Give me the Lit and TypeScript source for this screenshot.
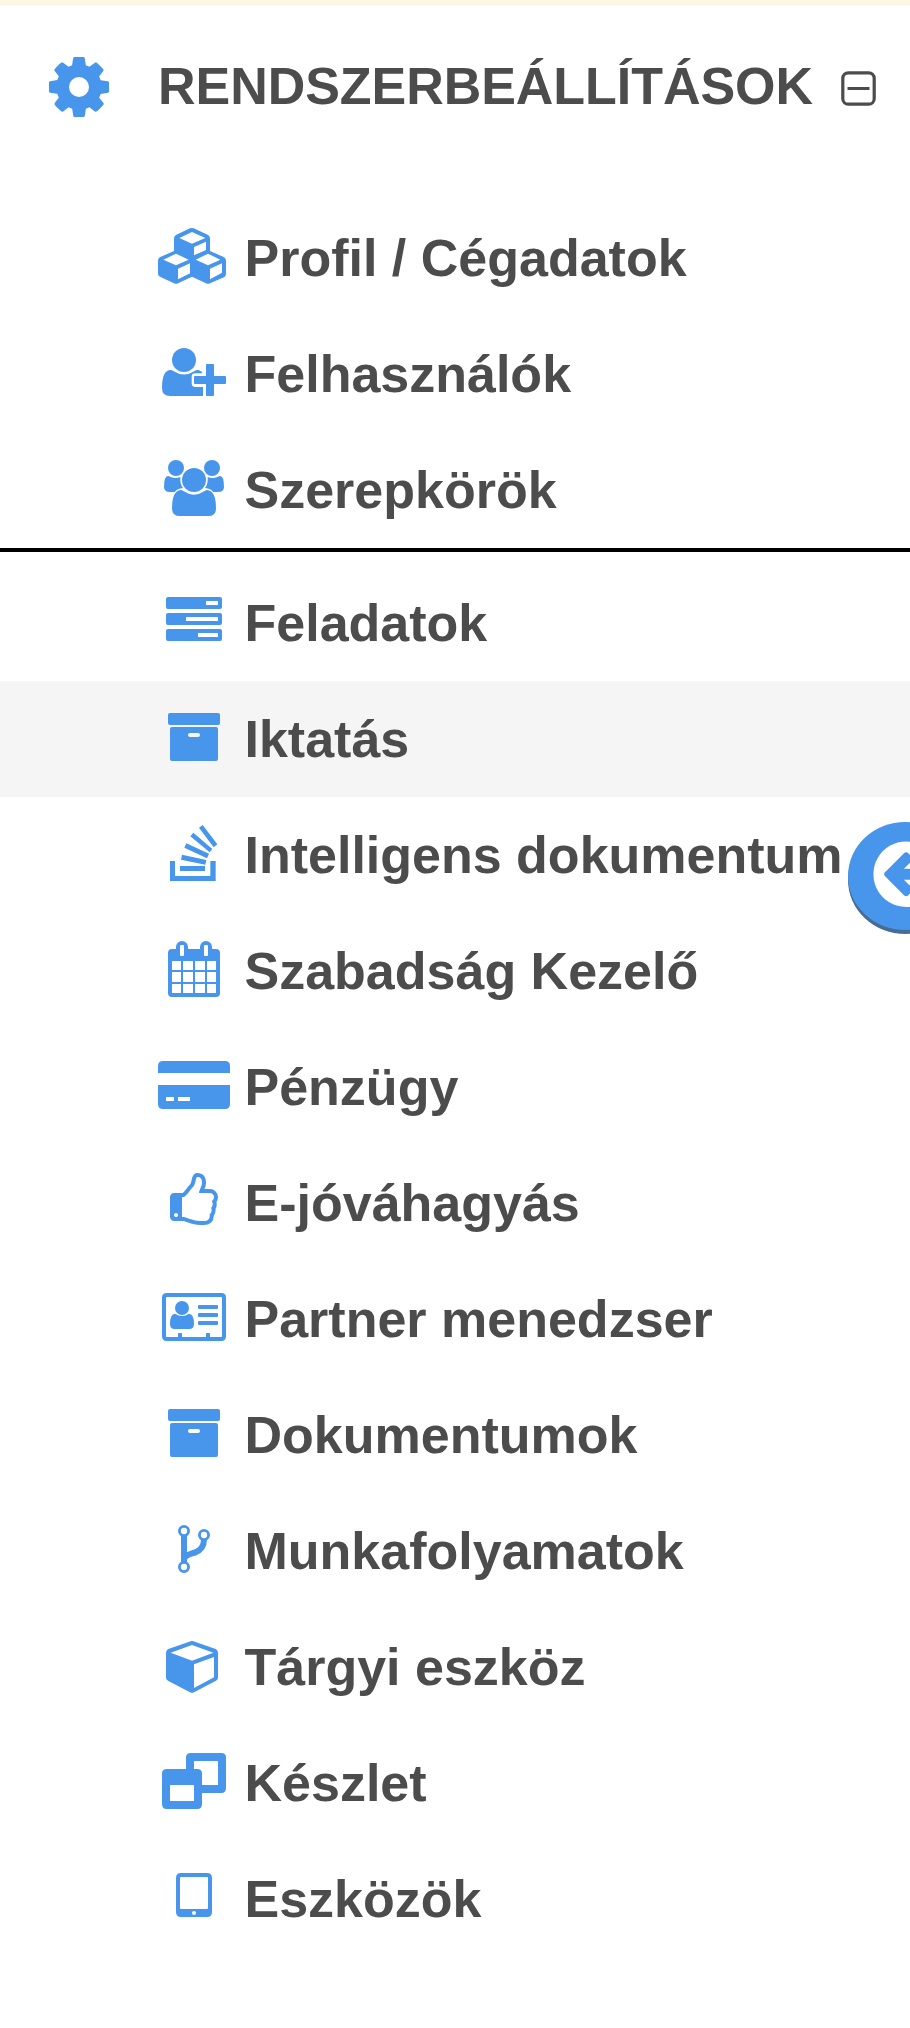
import { LitElement, html, svg, css, SVGTemplateResult } from "lit";
import { customElement, property } from "lit/decorators.js";

/* Glyphs share one 216 x 168 grid (three units per pixel). */
const icons: Record<string, SVGTemplateResult> = {
  cubes: svg`<path fill-rule="evenodd" d="M102 0Q104 0 107 1L149 20Q156 23 156 31V69L197 87Q204 90 204 98V137Q204 145 198 148L156 166Q150 169 144 166L102 146L60 166Q54 169 48 166L6 146Q0 143 0 137V97Q0 90 7 87L48 69V31Q48 24 55 20L96 1Q99 0 102 0ZM102 12L64 30L102 47L142 30ZM108 57V82L144 66V41ZM54 77L16 95L54 112L92 95ZM60 122V154L96 136V106ZM150 77L113 95L150 112L187 95ZM156 122V154L192 134V106Z"/>`,
  userPlus: svg`
    <circle cx="78" cy="48" r="36"/>
    <path d="M38 78Q42 78 46 81Q78 102 110 81Q114 78 118 78Q126 78 132 84L133 88H112Q101 88 101 98V118Q101 129 112 129H135V156H36Q12 156 12 132Q12 78 38 78Z"/>
    <path d="M147 60H165Q168 60 168 63V96H201Q204 96 204 99V117Q204 120 201 120H168V153Q168 156 165 156H147Q144 156 144 153V120H111Q108 120 108 117V99Q108 96 111 96H144V63Q144 60 147 60Z"/>`,
  users: svg`
    <circle cx="54" cy="24" r="24"/><circle cx="162" cy="24" r="24"/><circle cx="108" cy="60" r="36"/>
    <path d="M30 48Q33 48 36 50Q52 58 67 51Q65 72 75 84Q58 86 50 96H36Q18 96 18 82Q18 48 30 48Z"/>
    <path d="M186 48Q183 48 180 50Q164 58 149 51Q151 72 141 84Q158 86 166 96H180Q198 96 198 82Q198 48 186 48Z"/>
    <path d="M68 90Q72 90 76 93Q108 115 140 93Q144 90 148 90Q174 92 174 146Q174 168 150 168H66Q42 168 42 146Q42 92 68 90Z"/>`,
  tasks: svg`<path fill-rule="evenodd" d="M30 12H186Q192 12 192 18V42Q192 48 186 48H30Q24 48 24 42V18Q24 12 30 12ZM144 24V36H180V24ZM30 60H186Q192 60 192 66V90Q192 96 186 96H30Q24 96 24 90V66Q24 60 30 60ZM84 72V84H180V72ZM30 108H186Q192 108 192 114V138Q192 144 186 144H30Q24 144 24 138V114Q24 108 30 108ZM120 120V132H180V120Z"/>`,
  archive: svg`
    <rect x="30" y="12" width="156" height="36" rx="6"/>
    <path fill-rule="evenodd" d="M42 54H174Q180 54 180 60V150Q180 156 174 156H42Q36 156 36 150V60Q36 54 42 54ZM96 72A6 6 0 0 0 96 84H120A6 6 0 0 0 120 72Z"/>`,
  stack: svg`<path d="M36 108H51V153H157V108H173V168H36ZM66 123H141V138H66ZM72 89L145 105L142 119L69 104ZM85 55L153 86L147 100L79 68ZM106 23L163 72L155 82L97 34ZM134 0L178 58L167 67L123 8Z"/>`,
  calendar: svg`<path fill-rule="evenodd" d="M54 24V18A18 18 0 0 1 90 18V24H126V18A18 18 0 0 1 162 18V24H174Q186 24 186 36V156Q186 168 174 168H42Q30 168 30 156V36Q30 24 42 24ZM69 12Q66 12 66 15V42Q66 45 69 45H75Q78 45 78 42V15Q78 12 75 12ZM141 12Q138 12 138 15V42Q138 45 141 45H147Q150 45 150 42V15Q150 12 147 12ZM42 60V87H69V60ZM75 60V87H105V60ZM111 60V87H141V60ZM147 60V87H174V60ZM42 93V123H69V93ZM75 93V123H105V93ZM111 93V123H141V93ZM147 93V123H174V93ZM42 129V156H69V129ZM75 129V156H105V129ZM111 129V156H141V129ZM147 129V156H174V129Z"/>`,
  card: svg`<path fill-rule="evenodd" d="M0 48V27Q0 12 15 12H201Q216 12 216 27V48ZM0 84H216V141Q216 156 201 156H15Q0 156 0 141ZM24 120V132H48V120ZM60 120V132H96V120Z"/>`,
  thumb: svg`<path transform="translate(24 0) scale(.09375)" d="M384 1344q0-26-19-45t-45-19-45 19-19 45 19 45 45 19 45-19 19-45zm1152-576q0-51-39-89.5t-89-38.5h-352q0-58 48-159.5t48-160.5q0-98-32-145t-128-47q-26 26-38 85t-30.5 125.5-59.5 109.5q-22 23-77 91-4 5-23 30t-31.5 41-34.5 42.5-40 44-38.5 35.5-40 27-35.5 9h-32v640h32q13 0 31.5 3t33 6.5 38 11 35 11.5 35.5 12.5 29 10.5q211 73 342 73h121q192 0 192-167 0-26-5-56 30-16 47.5-52.5t17.5-73.5-18-69q53-50 53-119 0-25-10-55.5t-25-47.5q32-1 53.5-47t21.5-81zm128-1q0 89-49 163 9 33 9 69 0 77-38 144 3 21 3 43 0 101-60 178 1 139-85 219.5t-227 80.5h-129q-96 0-189.5-22.5t-216.5-65.5q-116-40-138-40h-288q-53 0-90.5-37.5t-37.5-90.5v-640q0-53 37.5-90.5t90.5-37.5h274q36-24 137-155 58-75 107-128 24-25 35.5-85.5t30.5-126.5 62-108q39-37 90-37 84 0 151 32.5t102 101.5 35 186q0 93-48 192h176q104 0 180 76t76 179z"/>`,
  contact: svg`
    <path fill-rule="evenodd" d="M26 12H190Q204 12 204 26V142Q204 156 190 156H26Q12 156 12 142V26Q12 12 26 12ZM26 24Q24 24 24 26V142Q24 144 26 144H60V134Q60 132 62 132H70Q72 132 72 134V144H144V134Q144 132 146 132H154Q156 132 156 134V144H190Q192 144 192 142V26Q192 24 190 24Z"/>
    <circle cx="72" cy="57" r="21"/>
    <path d="M51 74Q72 88 93 74Q108 75 108 105Q108 120 94 120H50Q36 120 36 105Q36 75 51 74Z"/>
    <rect x="120" y="48" width="60" height="12" rx="3"/><rect x="120" y="72" width="60" height="12" rx="3"/><rect x="120" y="96" width="60" height="12" rx="3"/>`,
  fork: svg`<g fill="none" stroke="currentColor">
    <path stroke-width="18" d="M78 44V124M138 55C138 75 131 87 112 94C92 101 78 103 78 120"/>
    <g stroke-width="8.5"><circle cx="78" cy="30" r="13.7"/><circle cx="138" cy="42" r="13.7"/><circle cx="78" cy="138" r="13.7"/></g></g>`,
  cube: svg`<path fill-rule="evenodd" d="M102 12Q104 12 106 13L173 36Q180 39 180 47V122Q180 128 174 131L108 166Q102 169 96 166L30 131Q24 128 24 122V47Q24 39 31 36L98 13Q100 12 102 12ZM102 24L38 47L102 71L166 47ZM108 82V153L168 121V60Z"/>`,
  windows: svg`
    <path d="M98 0H190Q204 0 204 14V106Q204 120 190 120H132V96H180V24H108V48H84V14Q84 0 98 0Z"/>
    <path fill-rule="evenodd" d="M26 48H118Q132 48 132 62V154Q132 168 118 168H26Q12 168 12 154V62Q12 48 26 48ZM36 96V144H108V96Z"/>`,
  tablet: svg`<path fill-rule="evenodd" d="M69 12H147Q162 12 162 27V129Q162 144 147 144H69Q54 144 54 129V27Q54 12 69 12ZM69 24Q66 24 66 27V117Q66 120 69 120H147Q150 120 150 117V27Q150 24 147 24ZM108 126A6 6 0 0 0 108 138A6 6 0 0 0 108 126Z"/>`,
};

@customElement("menu-row")
class MenuRow extends LitElement {
  @property() icon = "";
  @property() label = "";
  static styles = css`
    :host { display: flex; align-items: center; height: 116px; padding: 0 0 4px 158px; box-sizing: border-box; }
    :host([active]) { background: #f5f5f5; }
    .icon { width: 72px; height: 56px; flex: none; color: #4895ec; fill: currentColor; }
    .label { margin-left: 14.5px; padding-top: 4px; white-space: nowrap; line-height: 60px; }
  `;
  render() {
    return html`<svg class="icon" viewBox="0 0 216 168">${icons[this.icon]}</svg><span class="label">${this.label}</span>`;
  }
}

@customElement("app-root")
class AppRoot extends LitElement {
  static styles = css`
    :host {
      display: block; position: relative; height: 2028px; overflow: hidden; box-sizing: border-box;
      border-top: 5px solid #fbf7e3; background: #fff; color: #4c4c4c;
      font: bold 52px "Liberation Sans", Arial, Helvetica, sans-serif;
    }
    .head { display: flex; align-items: flex-start; height: 195px; padding-left: 43.5px; box-sizing: border-box; }
    .cog { width: 70px; height: 70px; margin-top: 47px; fill: #4895ec; flex: none; }
    .title { margin: 51px 0 0 44.5px; line-height: 60px; width: 655px; flex: none; white-space: nowrap; letter-spacing: -0.04px; }
    .minus { width: 35px; height: 35px; margin: 66px 0 0 28px; fill: none; stroke: #4c4c4c; flex: none; }
    .group { border-bottom: 4px solid #000; margin-bottom: 13px; }
    .back { position: absolute; left: 848px; top: 817px; width: 115px; height: 108px; border-radius: 50%; background: #4895ec; box-shadow: 0 4px 0 #486d94; }
    .arrow { display: block; width: 76.4px; height: 76.4px; margin: 13.6px 0 0 19.6px; fill: #fff; }
  `;
  private top = [["cubes", "Profil / Cégadatok"], ["userPlus", "Felhasználók"], ["users", "Szerepkörök"]];
  private rest = [
    ["tasks", "Feladatok"], ["archive", "Iktatás"], ["stack", "Intelligens dokumentum"], ["calendar", "Szabadság Kezelő"],
    ["card", "Pénzügy"], ["thumb", "E-jóváhagyás"], ["contact", "Partner menedzser"], ["archive", "Dokumentumok"],
    ["fork", "Munkafolyamatok"], ["cube", "Tárgyi eszköz"], ["windows", "Készlet"], ["tablet", "Eszközök"],
  ];
  render() {
    return html`
      <div class="head">
        <svg class="cog" viewBox="0 0 1792 1792"><path d="M1152 896q0-106-75-181t-181-75-181 75-75 181 75 181 181 75 181-75 75-181zm512-109v222q0 12-8 23t-20 13l-185 28q-19 54-39 91 35 50 107 138 10 12 10 25t-9 23q-27 37-99 108t-94 71q-12 0-26-9l-138-108q-44 23-91 38-16 136-29 186-7 28-36 28h-222q-14 0-24.5-8.5t-11.5-21.5l-28-184q-49-16-90-37l-141 107q-10 9-25 9-14 0-25-11-126-114-165-168-7-10-7-23 0-12 8-23 15-21 51-66.5t54-70.5q-27-50-41-99l-183-27q-13-2-21-12.5t-8-23.5v-222q0-12 8-23t19-13l186-28q14-46 39-92-40-57-107-138-10-12-10-24 0-10 9-23 26-36 98.5-107.5t94.5-71.5q13 0 26 10l138 107q44-23 91-38 16-136 29-186 7-28 36-28h222q14 0 24.5 8.5t11.5 21.5l28 184q49 16 90 37l142-107q9-9 24-9 13 0 25 10 129 119 165 170 7 8 7 22 0 12-8 23-15 21-51 66.5t-54 70.5q26 50 41 98l183 28q13 2 21 12.5t8 23.5z"/></svg>
        <span class="title">RENDSZERBEÁLLÍTÁSOK</span>
        <svg class="minus" viewBox="0 0 35 35"><rect x="1.8" y="1.8" width="31.4" height="31.4" rx="5.5" stroke-width="3.2"/><path d="M6.5 17.5H28.5" stroke-width="3"/></svg>
      </div>
      <div class="group">${this.top.map(([i, l]) => html`<menu-row icon=${i} label=${l}></menu-row>`)}</div>
      ${this.rest.map(([i, l]) => html`<menu-row icon=${i} label=${l} ?active=${l === "Iktatás"}></menu-row>`)}
      <div class="back">
        <svg class="arrow" viewBox="0 0 1792 1792"><path d="M1408 960v-128q0-26-19-45t-45-19h-502l189-189q19-19 19-45t-19-45l-91-91q-18-18-45-18t-45 18l-362 362-91 91q-18 18-18 45t18 45l91 91 362 362q18 18 45 18t45-18l91-91q18-18 18-45t-18-45l-189-189h502q26 0 45-19t19-45zm256-64q0 209-103 385.5t-279.5 279.5-385.5 103-385.5-103-279.5-279.5-103-385.5 103-385.5 279.5-279.5 385.5-103 385.5 103 279.5 279.5 103 385.5z"/></svg>
      </div>`;
  }
}
